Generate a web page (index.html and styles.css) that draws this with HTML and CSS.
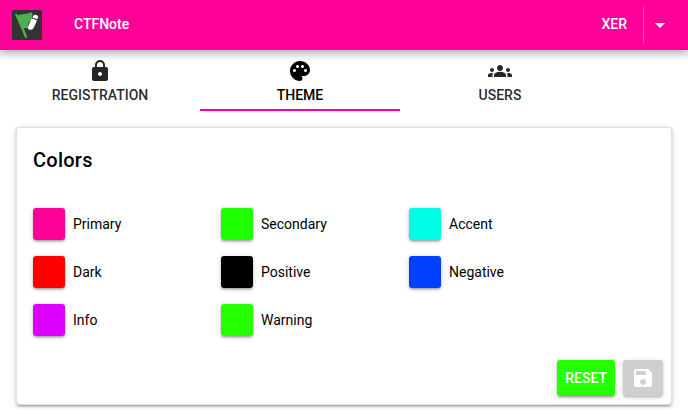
FILE: index.html
```html
<!DOCTYPE html>
<html lang="en">
<head>
<meta charset="utf-8">
<title>CTFNote</title>
<link rel="stylesheet" href="styles.css">
</head>
<body>
<header class="header">
  <svg class="logo" viewBox="0 0 30 30">
    <rect width="30" height="30" rx="1" fill="#333"/>
    <path d="M3 4.300 4.600 3.800 6 5.500C9 3.500 13 5 19.800 2.300L20.600 4 19.500 9 16.500 13 15.800 18 11.800 18.200 15.300 27 13.500 28.500Z" fill="#4caf50"/>
    <path d="M19.200 8.700Q22 8.300 25 10.500L21.300 18.500Q19.500 20.500 16.500 19.500L15.900 17.500Z" fill="#fff"/>
    <path d="M20.200 7.600 21.700 5.200Q24.500 4 26.200 6.300L25.500 9.200Z" fill="#fff"/>
  </svg>
  <span class="brand">CTFNote</span>
  <button class="user">XER</button>
  <button class="user-menu" aria-label="Menu"><svg class="icon" viewBox="0 0 24 24"><path d="M7 10l5 5 5-5z"/></svg></button>
</header>
<nav class="tabs">
  <a class="tab">
    <svg class="icon" viewBox="0 0 24 24"><path d="M18 8h-1V6c0-2.760-2.240-5-5-5S7 3.240 7 6v2H6c-1.100 0-2 .9-2 2v10c0 1.100.9 2 2 2h12c1.100 0 2-.9 2-2V10c0-1.100-.9-2-2-2zm-6 9c-1.100 0-2-.9-2-2s.9-2 2-2 2 .9 2 2-.9 2-2 2zm3.100-9H8.900V6c0-1.710 1.390-3.100 3.100-3.100s3.100 1.390 3.100 3.100v2z"/></svg>
    <span class="tab-label">Registration</span>
  </a>
  <a class="tab tab-active">
    <svg class="icon" viewBox="0 0 24 24"><path d="M12 2C6.490 2 2 6.490 2 12s4.490 10 10 10c1.380 0 2.500-1.120 2.500-2.500 0-.61-.23-1.200-.64-1.670-.08-.1-.13-.21-.13-.33 0-.28.22-.5.5-.5H16c3.310 0 6-2.690 6-6 0-4.960-4.490-9-10-9zm-5.500 11c-.83 0-1.500-.67-1.500-1.500S5.670 10 6.500 10s1.500.67 1.500 1.500S7.330 13 6.500 13zm3-4C8.670 9 8 8.330 8 7.500S8.670 6 9.500 6s1.500.67 1.500 1.500S10.330 9 9.500 9zm5 0c-.83 0-1.500-.67-1.500-1.500S13.670 6 14.500 6s1.500.67 1.500 1.500S15.330 9 14.500 9zm3 4c-.83 0-1.500-.67-1.500-1.500s.67-1.500 1.500-1.500 1.500.67 1.500 1.500-.67 1.500-1.500 1.500z"/></svg>
    <span class="tab-label">Theme</span>
  </a>
  <a class="tab">
    <svg class="icon" viewBox="0 0 24 24"><path d="M12 12.750c1.630 0 3.070.39 4.240.9 1.080.48 1.760 1.560 1.760 2.730V18H6v-1.610c0-1.180.68-2.260 1.760-2.730 1.170-.52 2.610-.91 4.240-.91zM4 13c1.100 0 2-.9 2-2s-.9-2-2-2-2 .9-2 2 .9 2 2 2zm1.130 1.100C4.760 14.040 4.390 14 4 14c-.99 0-1.930.21-2.780.58C.48 14.900 0 15.620 0 16.430V18h4.500v-1.610c0-.83.23-1.610.63-2.290zM20 13c1.100 0 2-.9 2-2s-.9-2-2-2-2 .9-2 2 .9 2 2 2zm4 3.430c0-.81-.48-1.530-1.220-1.850C21.930 14.210 20.990 14 20 14c-.39 0-.76.04-1.130.1.4.68.63 1.460.63 2.290V18H24v-1.570zM12 6c1.660 0 3 1.340 3 3s-1.340 3-3 3-3-1.340-3-3 1.340-3 3-3z"/></svg>
    <span class="tab-label">Users</span>
  </a>
</nav>
<main class="card">
  <h1 class="title">Colors</h1>
  <div class="colors">
    <div class="color"><span class="swatch primary"></span>Primary</div>
    <div class="color"><span class="swatch secondary"></span>Secondary</div>
    <div class="color"><span class="swatch accent"></span>Accent</div>
    <div class="color"><span class="swatch dark"></span>Dark</div>
    <div class="color"><span class="swatch positive"></span>Positive</div>
    <div class="color"><span class="swatch negative"></span>Negative</div>
    <div class="color"><span class="swatch info"></span>Info</div>
    <div class="color"><span class="swatch warning"></span>Warning</div>
  </div>
  <div class="actions">
    <button class="btn btn-reset">Reset</button>
    <button class="btn btn-save" disabled aria-label="Save"><svg class="icon" viewBox="0 0 24 24"><path d="M17 3H5c-1.110 0-2 .9-2 2v14c0 1.100.89 2 2 2h14c1.100 0 2-.9 2-2V7l-4-4zm-5 16c-1.660 0-3-1.340-3-3s1.340-3 3-3 3 1.340 3 3-1.340 3-3 3zm3-10H5V5h10v4z"/></svg></button>
  </div>
</main>
</body>
</html>
```

FILE: styles.css
```css
* { box-sizing: border-box; }
body {
  margin: 0;
  height: 414px;
  overflow: hidden;
  background: #fff;
  color: #000;
  font: 14px/21px Roboto, sans-serif;
  -webkit-font-smoothing: antialiased;
}
button {
  border: 0;
  padding: 0;
  background: none;
  color: inherit;
  font: 500 14px/24px Roboto, sans-serif;
  text-transform: uppercase;
}
.icon { display: block; width: 24px; height: 24px; fill: currentColor; }

.header {
  display: flex;
  align-items: center;
  height: 50px;
  padding: 0 12px;
  background: #ff0099;
  color: #fff;
  box-shadow: 0 1px 10px 2px rgba(0, 0, 0, .2), 0 1px 10px rgba(0, 0, 0, .24);
}
.logo { width: 30px; height: 30px; }
.brand { margin: 0 auto 0 32px; font-weight: 500; line-height: 24px; padding-bottom: 2px; }
.user { height: 36px; padding: 0 16px 2px; }
.user-menu {
  display: flex;
  align-items: center;
  justify-content: center;
  width: 33px;
  height: 36px;
  border-left: 1px solid rgba(255, 255, 255, .3);
}

.tabs { display: flex; height: 61px; }
.tab {
  display: flex;
  flex-direction: column;
  align-items: center;
  width: 200px;
  padding-top: 9px;
  color: rgba(0, 0, 0, .85);
}
.tab-active { color: #000; border-bottom: 2px solid #ff0099; }
.tab-label { font-weight: 500; line-height: 24px; text-transform: uppercase; }

.card {
  height: 278px;
  margin: 16px;
  padding: 16px;
  border: 1px solid rgba(0, 0, 0, .12);
  border-radius: 4px;
  background: #fff;
  box-shadow: 0 1px 5px rgba(0, 0, 0, .2), 0 2px 2px rgba(0, 0, 0, .14), 0 3px 1px -2px rgba(0, 0, 0, .12);
}
.title { margin: 0; font-size: 20px; font-weight: 500; line-height: 32px; letter-spacing: .25px; }
.colors {
  display: grid;
  grid-template-columns: repeat(3, 188px);
  gap: 16px 0;
  margin-top: 32px;
}
.color { display: flex; align-items: center; gap: 8px; height: 32px; }
.swatch, .btn {
  border-radius: 3px;
  box-shadow: 0 1px 5px rgba(0, 0, 0, .2), 0 2px 2px rgba(0, 0, 0, .14), 0 3px 1px -2px rgba(0, 0, 0, .12);
}
.swatch { width: 32px; height: 32px; }
.primary { background: #ff0099; }
.secondary { background: #1eff00; }
.accent { background: #00ffe5; }
.dark { background: #ff0000; }
.positive { background: #000; }
.negative { background: #0040ff; }
.info { background: #dd00ff; }
.warning { background: #26ff00; }

.actions { display: flex; justify-content: flex-end; gap: 8px; margin: 24px -8px 0 0; }
.btn { height: 36px; padding: 0 8px; color: #fff; }
.btn-reset { background: #26ff00; }
.btn-save { background: #bbb; opacity: .7; }
```
